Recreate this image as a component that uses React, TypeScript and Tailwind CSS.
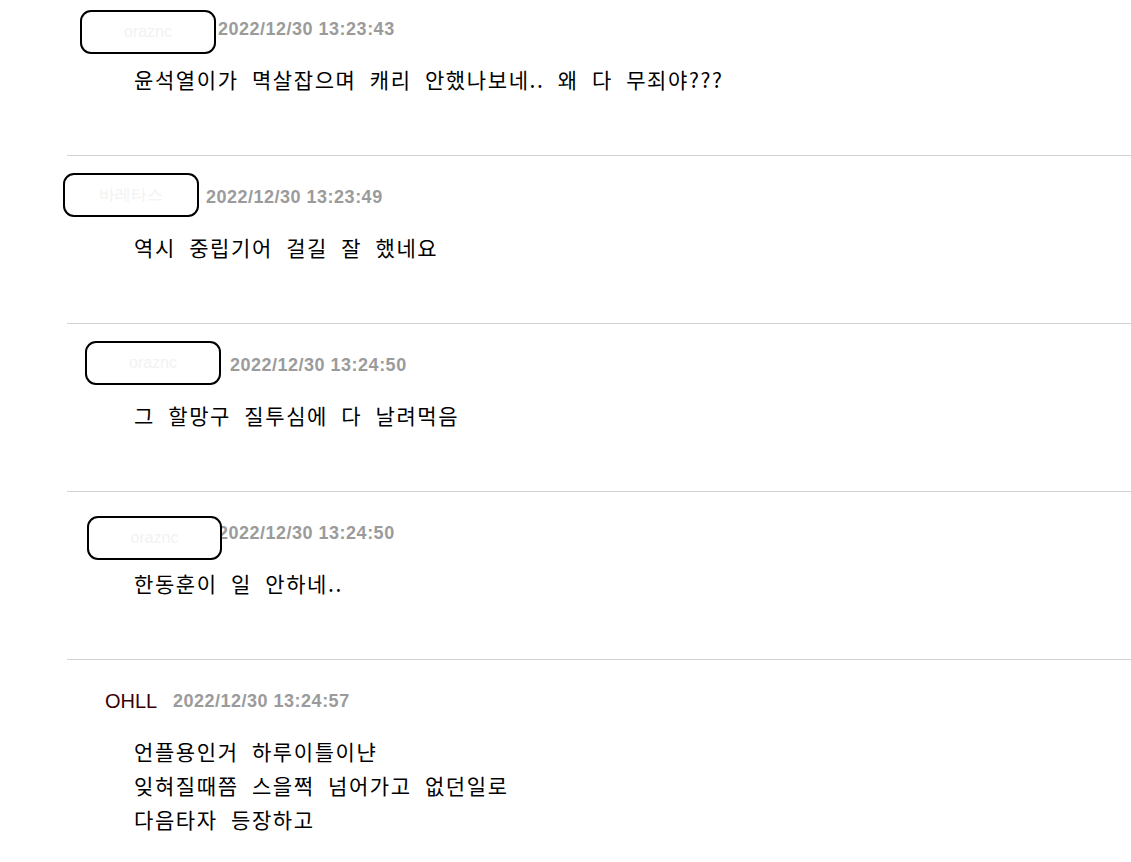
import React from "react";

type Entry = {
  name: string;
  nameWidth: number;
  date: string;
  lines: string[];
  mask?: { left: number; top: number; width: number };
};

const ENTRIES: Entry[] = [
  {
    name: "oraznc",
    nameWidth: 113,
    date: "2022/12/30 13:23:43",
    lines: ["윤석열이가 멱살잡으며 캐리 안했나보네.. 왜 다 무죄야???"],
    mask: { left: 13, top: 22, width: 136 },
  },
  {
    name: "바레타스",
    nameWidth: 101,
    date: "2022/12/30 13:23:49",
    lines: ["역시 중립기어 걸길 잘 했네요"],
    mask: { left: -4, top: 17, width: 136 },
  },
  {
    name: "oraznc",
    nameWidth: 125,
    date: "2022/12/30 13:24:50",
    lines: ["그 할망구 질투심에 다 날려먹음"],
    mask: { left: 18, top: 17, width: 136 },
  },
  {
    name: "oraznc",
    nameWidth: 113,
    date: "2022/12/30 13:24:50",
    lines: ["한동훈이 일 안하네.."],
    mask: { left: 20, top: 24, width: 135 },
  },
  {
    name: "OHLL",
    nameWidth: 68,
    date: "2022/12/30 13:24:57",
    lines: ["언플용인거 하루이틀이냔", "잊혀질때쯤 스을쩍 넘어가고 없던일로", "다음타자 등장하고"],
  },
];

function Comment({ entry, last }: { entry: Entry; last: boolean }) {
  return (
    <div className={`relative h-[168px] pt-[29px] ${last ? "" : "border-b border-[#d3d3d3]"}`}>
      <div className="flex h-[24px] items-center pl-[38px]">
        <span
          className="shrink-0 text-[20px] leading-[24px] text-[#3a0006] font-['Liberation_Sans',sans-serif]"
          style={{ width: entry.nameWidth }}
        >
          {entry.mask ? "" : entry.name}
        </span>
        <span className="text-[18px] font-bold leading-[24px] tracking-[0.5px] text-[#9b9b9b] font-['Liberation_Sans',sans-serif]">
          {entry.date}
        </span>
      </div>
      <div className="mt-[21px] pl-[67px] text-[21px] leading-[34px] tracking-[1.6px] text-black [word-spacing:7px] font-['Noto_Sans_CJK_KR','Noto_Sans',sans-serif]">
        {entry.lines.map((l, i) => (
          <div key={i}>{l}</div>
        ))}
      </div>
      {entry.mask && (
        <div
          className="absolute flex h-[44px] items-center justify-center rounded-[11px] border-2 border-black bg-white text-[16px] text-[#f2f2f2] font-['Liberation_Sans',sans-serif]"
          style={{ left: entry.mask.left, top: entry.mask.top, width: entry.mask.width }}
        >
          {entry.name}
        </div>
      )}
    </div>
  );
}

export default function App() {
  return (
    <div className="h-[862px] w-[1131px] overflow-hidden bg-white">
      <div className="-mt-[12px] ml-[67px]">
        {ENTRIES.map((e, i) => (
          <Comment key={i} entry={e} last={i === ENTRIES.length - 1} />
        ))}
      </div>
    </div>
  );
}
